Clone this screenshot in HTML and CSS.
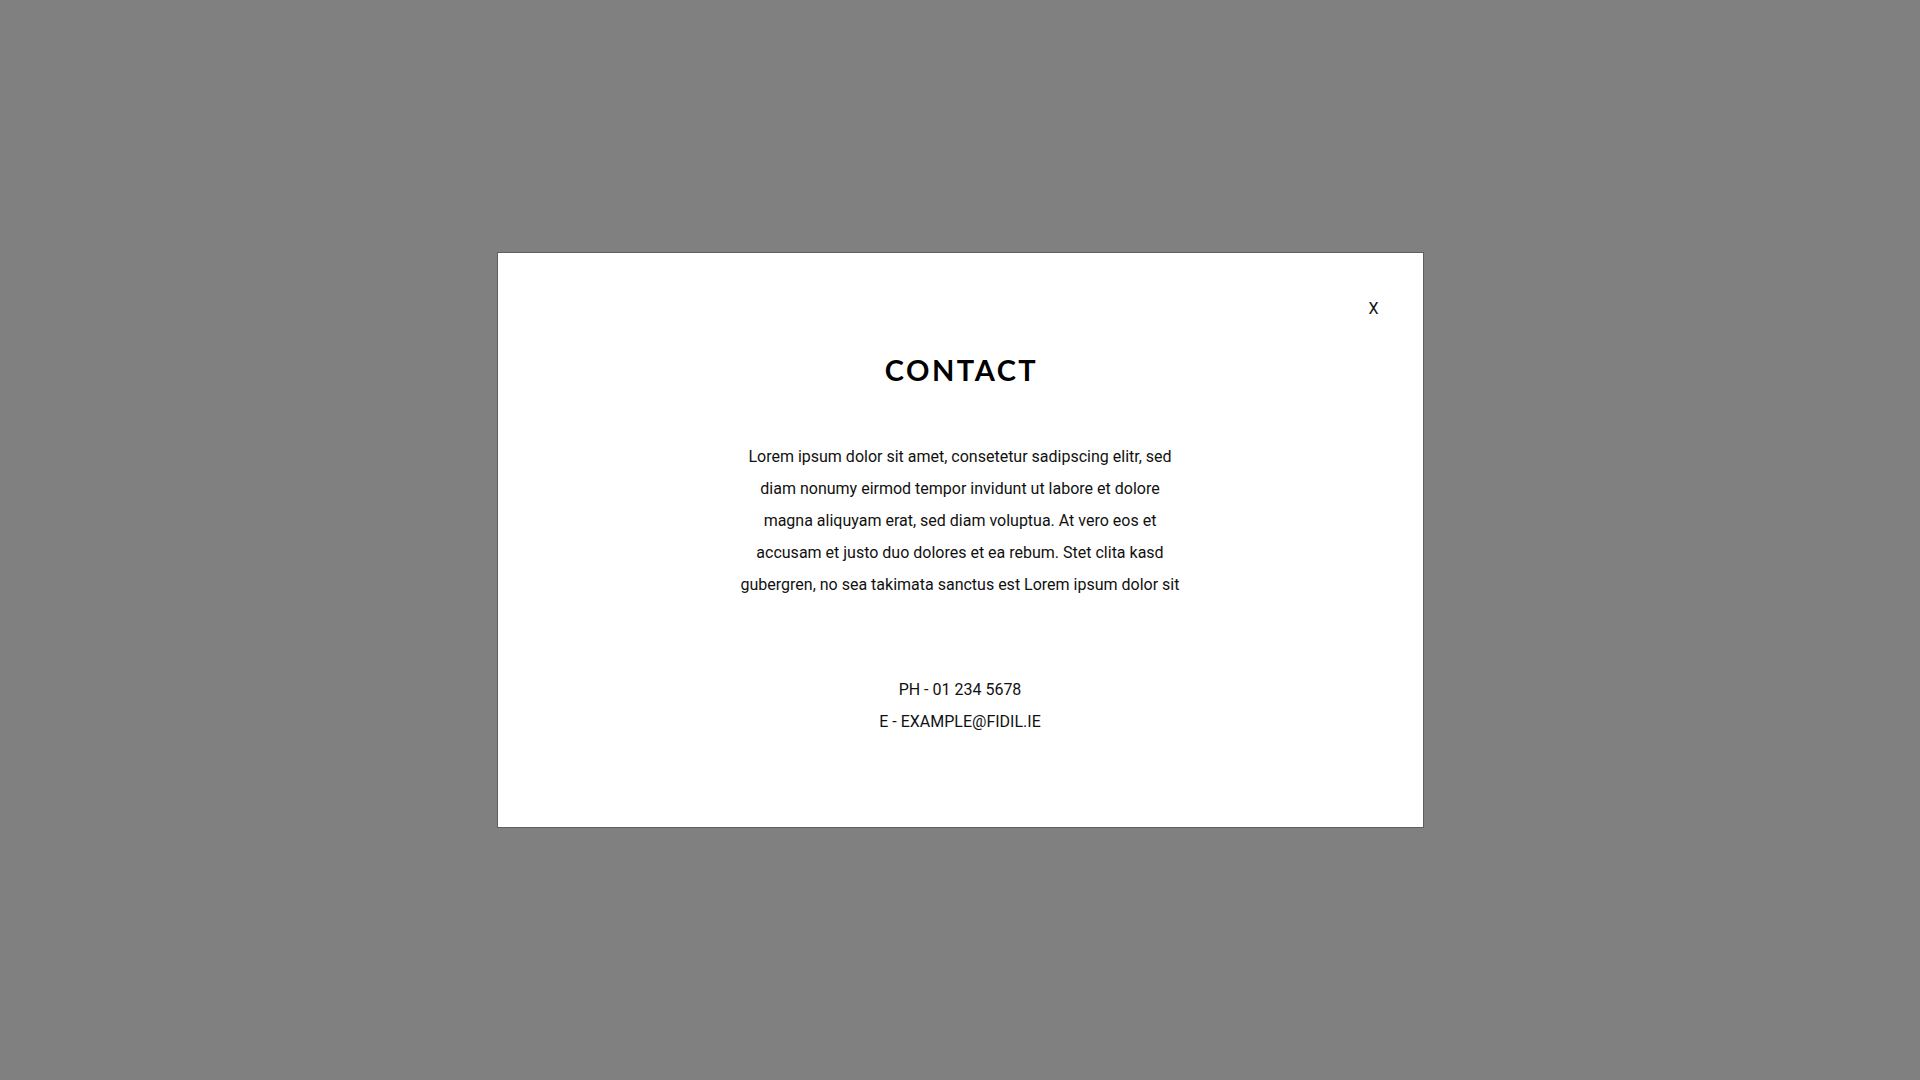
FILE: index.html
```html
<!DOCTYPE html>
<html lang="en">
<head>
<meta charset="utf-8">
<title>Contact</title>
<link rel="stylesheet" href="styles.css">
</head>
<body>
<div class="overlay">
  <div class="modal" role="dialog" aria-labelledby="contact-title">
    <button class="close" type="button" aria-label="Close">X</button>
    <h2 class="title" id="contact-title">CONTACT</h2>
    <p class="intro">Lorem ipsum dolor sit amet, consetetur sadipscing elitr, sed diam nonumy eirmod tempor invidunt ut labore et dolore magna aliquyam erat, sed diam voluptua. At vero eos et accusam et justo duo dolores et ea rebum. Stet clita kasd gubergren, no sea takimata sanctus est Lorem ipsum dolor sit</p>
    <div class="details">
      <div class="line">PH - 01 234 5678</div>
      <div class="line">E - EXAMPLE@FIDIL.IE</div>
    </div>
  </div>
</div>
</body>
</html>
```

FILE: styles.css
```css
* { box-sizing: border-box; }
html, body {
  margin: 0;
  padding: 0;
  height: 100%;
}
body {
  background: #808080;
  font-family: Roboto, "Liberation Sans", sans-serif;
  color: #111;
}
.overlay {
  height: 100vh;
  display: flex;
  align-items: center;
  justify-content: center;
}
.modal {
  position: relative;
  width: 927px;
  height: 576px;
  background: #fff;
  border: 1px solid #5f5f5f;
  padding-top: 100px;
  display: flex;
  flex-direction: column;
  align-items: center;
}
.close {
  position: absolute;
  top: 46px;
  right: 44px;
  background: none;
  border: 0;
  padding: 0;
  font-family: Roboto, "Liberation Sans", sans-serif;
  font-size: 16px;
  line-height: normal;
  color: #111;
  cursor: pointer;
}
.title {
  margin: 0;
  padding-left: 3px;
  font-family: Lato, "Open Sans", sans-serif;
  font-weight: 700;
  font-size: 29px;
  line-height: 1.2;
  letter-spacing: 2.5px;
  color: #000;
}
.intro {
  margin: 53px 0 0;
  width: 450px;
  text-align: center;
  font-size: 16px;
  line-height: 32px;
}
.details {
  margin-top: 73px;
  text-align: center;
  font-size: 16px;
  line-height: 32px;
}
```
